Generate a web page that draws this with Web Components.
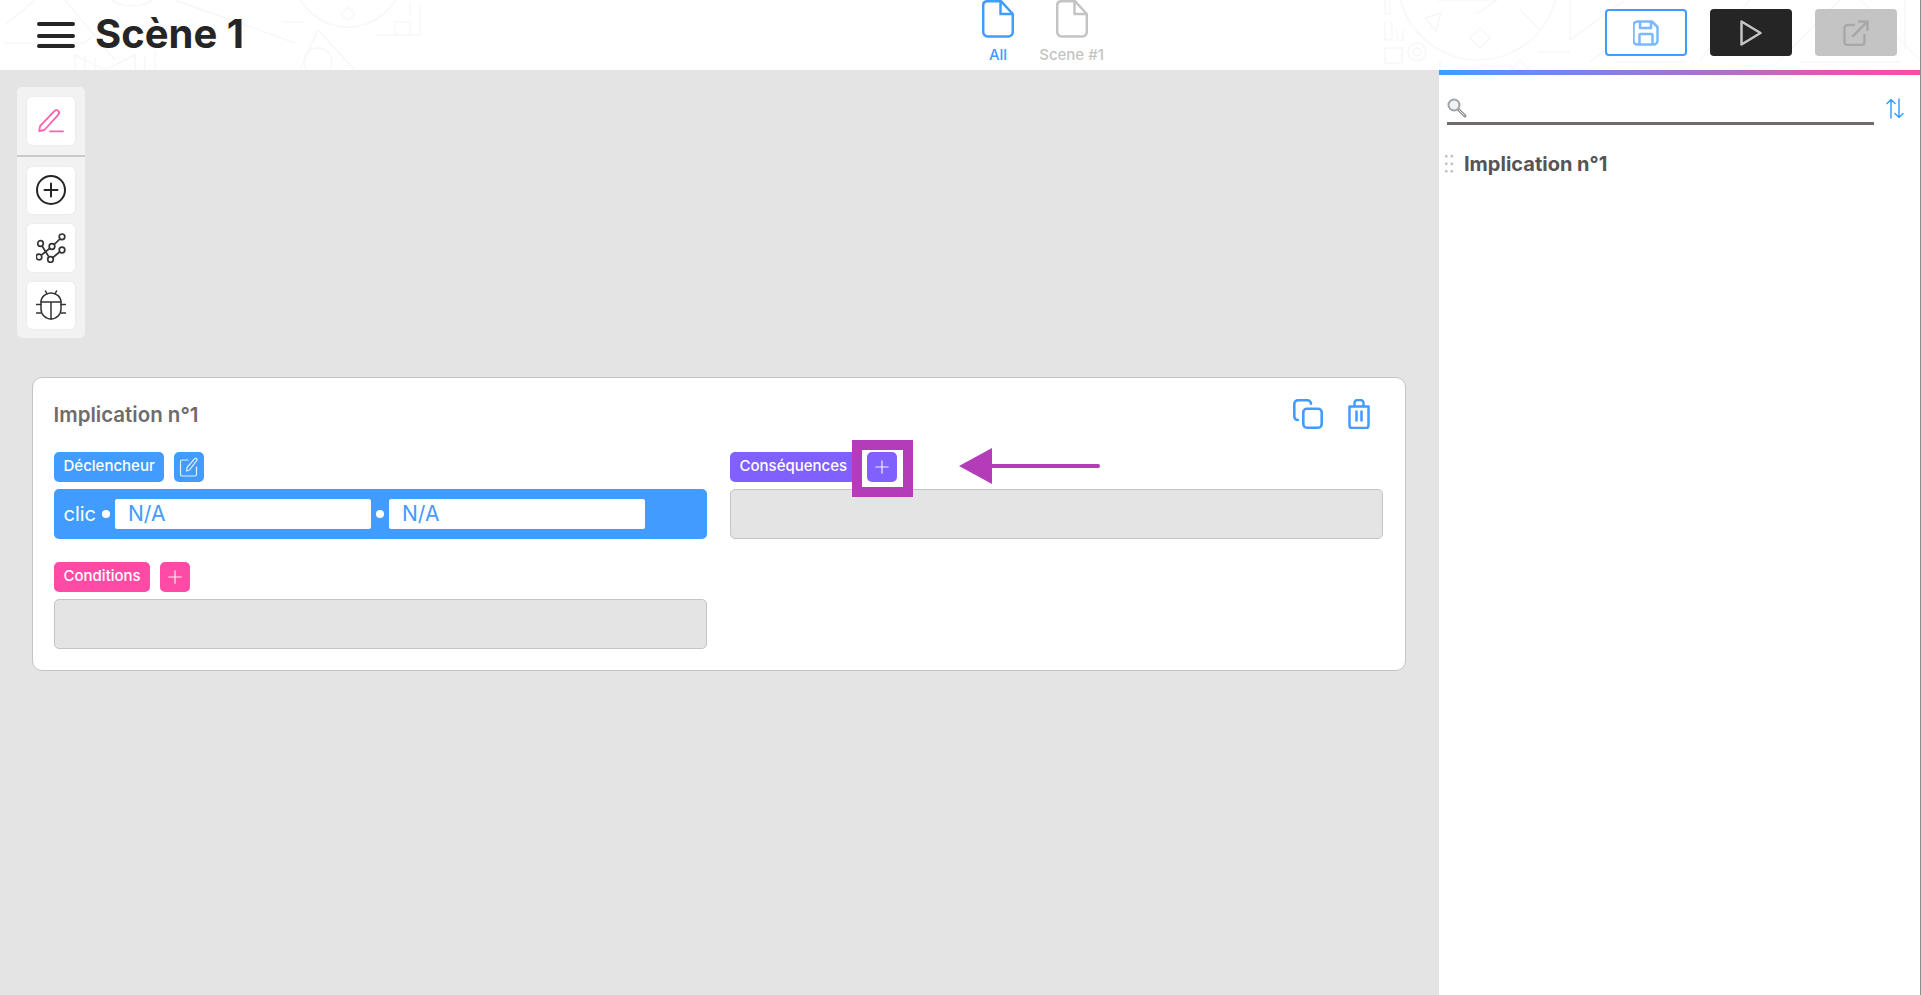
<!DOCTYPE html>
<html lang="fr">
<head>
<meta charset="utf-8">
<title>Scène 1</title>
<style>
  html, body { margin: 0; height: 100%; }
  body { font-family: "Inter", "Liberation Sans", sans-serif; color: #252525; background: #e4e4e4; overflow: hidden; }
  app-shell { height: 995px; }
</style>
</head>
<body>
<app-shell>
  <top-bar slot="top" heading="Scène 1"></top-bar>
  <tool-strip slot="tools"></tool-strip>
  <implication-card slot="canvas" heading="Implication n°1"></implication-card>
  <side-panel slot="side"></side-panel>
</app-shell>

<script>
const icons = {
  burger: `<svg width="38" height="26" viewBox="0 0 38 26"><path d="M2 2h34M2 14h34M2 24h34" stroke="#252525" stroke-width="4" stroke-linecap="round" fill="none"/></svg>`,
  file: `<svg width="32" height="38" viewBox="0 0 32 38" fill="none" stroke="currentColor" stroke-width="2.5" stroke-linejoin="round"><path d="M5 1.2h14L30.8 14v18a4.5 4.5 0 0 1-4.5 4.5H5.7A4.5 4.5 0 0 1 1.2 32V5A4 4 0 0 1 5 1.2z"/><path d="M18.5 1.2V14h12.3"/></svg>`,
  save: `<svg width="26" height="26" viewBox="0 0 26 26" fill="none" stroke="#7ab9ff" stroke-width="2.5" stroke-linejoin="round"><path d="M4.5 1.5h14.5l5.5 5.5v13.5a4 4 0 0 1-4 4h-16a4 4 0 0 1-4-4v-15a4 4 0 0 1 4-4z"/><path d="M7 1.5v6.5h11V1.5M6.5 24.5v-9.5a1 1 0 0 1 1-1h11a1 1 0 0 1 1 1v9.5"/></svg>`,
  play: `<svg width="22" height="26" viewBox="0 0 22 26" fill="none" stroke="#c4c4c4" stroke-width="2.5" stroke-linejoin="round"><path d="M1.5 1.5v23L20.5 13z"/></svg>`,
  share: `<svg width="26" height="26" viewBox="0 0 26 26" fill="none" stroke="#a8a8a8" stroke-width="2.5" stroke-linecap="round" stroke-linejoin="round"><path d="M11 5H4.5a3 3 0 0 0-3 3v14a3 3 0 0 0 3 3h14a3 3 0 0 0 3-3v-7"/><path d="M10 16L24.5 1.5M16 1.5h8.5V10"/></svg>`,
  pen: `<svg width="26" height="24" viewBox="0 0 26 24" fill="none" stroke="#ff5fb2" stroke-width="1.800" stroke-linecap="round" stroke-linejoin="round"><path d="M1.200 22.200l1-5.400L16.600 1.900a2.600 2.600 0 0 1 3.700 0 2.800 2.800 0 0 1 .1 3.800L6.400 21z"/><path d="M12 22.400h13"/></svg>`,
  add: `<svg width="30" height="30" viewBox="0 0 30 30" fill="none" stroke="#252525" stroke-width="2" stroke-linecap="round"><circle cx="15" cy="15" r="14"/><path d="M15 8.500v13M8.500 15h13"/></svg>`,
  graph: `<svg width="30" height="30" viewBox="0 0 30 30" fill="none" stroke="#333" stroke-width="1.700"><path d="M4.500 10.500l10 16M3 24l13-10.500L26 4M14.500 26.500L26 17"/><g fill="#fff"><circle cx="26" cy="3.800" r="2.800"/><circle cx="4.500" cy="10.500" r="2.800"/><circle cx="16" cy="13.500" r="2.800"/><circle cx="26" cy="17" r="2.800"/><circle cx="3" cy="24" r="2.800"/><circle cx="14.500" cy="26.500" r="2.800"/></g></svg>`,
  bug: `<svg width="30" height="30" viewBox="0 0 30 30" fill="none" stroke="#333" stroke-width="1.500" stroke-linecap="round"><path d="M5 12a10 9 0 0 1 20 0v7a10 10 0 0 1-20 0z"/><path d="M5 12h20M15 12v17M9.500 1l1.500 3M20.500 1L19 4M.5 14.500h4.500M29.500 14.500H25M.5 23h4.500M29.500 23H25"/></svg>`,
  edit: `<svg width="20" height="20" viewBox="0 0 20 20" fill="none" stroke="#fff" stroke-width="1.200" stroke-linecap="round" stroke-linejoin="round" opacity=".85"><path d="M9 3H3a1.500 1.500 0 0 0-1.500 1.500v13A1.500 1.500 0 0 0 3 19h13a1.500 1.500 0 0 0 1.500-1.500V10"/><path d="M7.500 14l.5-3.500L15.500 1.800a1.300 1.300 0 0 1 2.300 1.600L10.500 13z"/></svg>`,
  plus: `<svg width="14" height="14" viewBox="0 0 14 14" stroke="#fff" stroke-width="1.200" stroke-linecap="round" opacity=".9"><path d="M7 .8v12.400M.8 7h12.400"/></svg>`,
  copy: `<svg width="30" height="30" viewBox="0 0 30 30" fill="none" stroke="#429cff" stroke-width="2.600" stroke-linejoin="round" stroke-linecap="round"><path d="M4.800 21A3.500 3.500 0 0 1 1.300 17.500V5A3.700 3.700 0 0 1 5 1.300h9.500A3.500 3.500 0 0 1 18 4.800"/><rect x="10.300" y="9.800" width="18.400" height="18.900" rx="3.500"/></svg>`,
  trash: `<svg width="22" height="30" viewBox="0 0 22 30" fill="none" stroke="#429cff" stroke-width="2.500" stroke-linejoin="round" stroke-linecap="round"><path d="M1.500 7.500h19v19a2.500 2.500 0 0 1-2.500 2.500H4a2.500 2.500 0 0 1-2.500-2.500z"/><path d="M6.500 7V4a3 3 0 0 1 3-3h3a3 3 0 0 1 3 3v3M8.500 12.500v9M13.500 12.500v9"/></svg>`,
  search: `<svg width="20" height="20" viewBox="0 0 20 20" fill="none"><path d="M11 11l7 7" stroke="#8d8d8d" stroke-width="3" stroke-linecap="round"/><path d="M11.500 11.500l6 6" stroke="#e8e8e8" stroke-width="1"/><circle cx="7" cy="7" r="5.500" fill="#eef3f8" stroke="#a3a3a3" stroke-width="2"/></svg>`,
  sort: `<svg width="18" height="21" viewBox="0 0 18 21" fill="none" stroke="#429cff" stroke-width="1.500" stroke-linecap="round" stroke-linejoin="round"><path d="M5 20V1.500M1 5.500l4-4 4 4M13 1v18.500M9 15.500l4 4 4-4"/></svg>`,
  grip: `<svg width="8" height="18" viewBox="0 0 8 18" fill="#c4c4c4"><rect width="2.500" height="2.500"/><rect x="5.500" width="2.500" height="2.500"/><rect y="7.500" width="2.500" height="2.500"/><rect x="5.500" y="7.500" width="2.500" height="2.500"/><rect y="15" width="2.500" height="2.500"/><rect x="5.500" y="15" width="2.500" height="2.500"/></svg>`
};

function shadow(el, html) {
  el.attachShadow({ mode: 'open' }).innerHTML = html;
}

class AppShell extends HTMLElement {
  constructor() {
    super();
    shadow(this, `
      <style>
        :host { display: grid; grid-template-columns: 1439px 1fr; grid-template-rows: 70px 1fr; border-right: 1px solid #8d8d8d; box-sizing: border-box; width: 1921px; }
        .top { grid-column: 1 / 3; }
        .canvas { background: #e4e4e4; padding: 17px 33px 0 32px; display: flex; flex-direction: column; align-items: flex-start; }
        ::slotted(tool-strip) { margin-left: -15px; }
        ::slotted(implication-card) { margin-top: 39px; }
      </style>
      <div class="top"><slot name="top"></slot></div>
      <div class="canvas"><slot name="tools"></slot><slot name="canvas"></slot></div>
      <slot name="side"></slot>`);
  }
}

class TopBar extends HTMLElement {
  constructor() {
    super();
    shadow(this, `
      <style>
        :host { display: block; position: relative; height: 70px; background: #fff; overflow: hidden; }
        .pattern { position: absolute; inset: 0; }
        .row { position: relative; height: 70px; display: grid; grid-template-columns: 982px 122px 1fr; }
        .left { display: flex; align-items: center; gap: 20px; padding-left: 37px; }
        .burger { display: flex; }
        h1 { margin: 0 0 2px; font-size: 40px; font-weight: 700; line-height: 66px; color: #252525; }
        .tabs { display: flex; justify-content: space-between; }
        .actions { display: flex; justify-content: flex-end; gap: 23px; padding: 9px 23px 0 0; }
      </style>
      <svg class="pattern" width="1921" height="70" fill="none" stroke="#f7f7f7" stroke-width="1.500">
        <path d="M5 25L35 0M5 43h80l25-23M65 0l50 60M175 0l120 43M75 70V55l30 15 30-15v15M85 55v15M95 58v12M145 55v15M155 50v20M285 22h20"/>
        <circle cx="132" cy="-32" r="38"/><circle cx="348" cy="-28" r="55"/>
        <path d="M348 7l7 7-7 7-7-7zM375 35h45V5M395 35V22h15v13M410 15V2M300 70l18-40 37 40"/><circle cx="318" cy="62" r="14"/>
        <path d="M1385 0v14h5V0M1385 22v18h7V22M1397 30v10h6V30"/>
        <rect x="1385" y="48" width="17" height="15"/><circle cx="1417" cy="52" r="9"/><circle cx="1417" cy="52" r="4"/>
        <circle cx="1478" cy="-20" r="80"/><path d="M1480 28l10 10-10 10-10-10zM1425 18l16-5-5 18zM1437 0h60l-20 14M1520 10l20 20M1538 52h32M1570 0v40l55-40M1590 62l50 -40M1615 62h70M1700 60l50 -60M1780 60l60-60M1800 62h100M1860 0l60 60M1905 0v50"/>
        <path d="M1440 70v-10M1510 70l10-10 10 10"/>
      </svg>
      <div class="row">
        <div class="left"><span class="burger">${icons.burger}</span><h1>${this.getAttribute('heading')}</h1></div>
        <div class="tabs">
          <scene-tab active>All</scene-tab>
          <scene-tab>Scene #1</scene-tab>
        </div>
        <div class="actions">
          <action-button kind="save">${icons.save}</action-button>
          <action-button kind="play">${icons.play}</action-button>
          <action-button kind="share">${icons.share}</action-button>
        </div>
      </div>`);
  }
}

class SceneTab extends HTMLElement {
  constructor() {
    super();
    shadow(this, `
      <style>
        :host { display: flex; flex-direction: column; align-items: center; color: #c4c4c4; font-size: 15px; font-weight: 500; }
        :host([active]) { color: #429cff; }
        .ico { display: flex; height: 38px; }
        .lbl { margin-top: 8px; line-height: 18px; }
      </style>
      <span class="ico">${icons.file}</span><span class="lbl"><slot></slot></span>`);
  }
}

class ActionButton extends HTMLElement {
  constructor() {
    super();
    shadow(this, `
      <style>
        :host { display: flex; align-items: center; justify-content: center; box-sizing: border-box; width: 82px; height: 47px; border-radius: 4px; background: #c4c4c4; }
        :host([kind=save]) { background: #fff; border: 2px solid #429cff; }
        :host([kind=play]) { background: #252525; }
      </style><slot></slot>`);
  }
}

class ToolStrip extends HTMLElement {
  constructor() {
    super();
    shadow(this, `
      <style>
        :host { display: block; width: 68px; background: #f2f2f2; border-radius: 5px; height: 251px; box-sizing: border-box; }
        .group { display: flex; flex-direction: column; align-items: center; gap: 10px; padding: 10px 0; }
        .first { border-bottom: 2px solid #cacaca; }
        .second { padding-top: 10px; }
      </style>
      <div class="group first"><tool-button>${icons.pen}</tool-button></div>
      <div class="group second">
        <tool-button>${icons.add}</tool-button>
        <tool-button>${icons.graph}</tool-button>
        <tool-button>${icons.bug}</tool-button>
      </div>`);
  }
}

class ToolButton extends HTMLElement {
  constructor() {
    super();
    shadow(this, `
      <style>
        :host { display: flex; align-items: center; justify-content: center; width: 48px; height: 47.500px; background: #fff; border-radius: 5px; box-shadow: 0 0 2px rgba(0,0,0,.08); }
      </style><slot></slot>`);
  }
}

class TagLabel extends HTMLElement {
  constructor() {
    super();
    shadow(this, `
      <style>
        :host { display: inline-flex; align-items: center; box-sizing: border-box; height: 30px; padding: 0 9.500px 2px 10px; border-radius: 5px; color: #fff; font-size: 15px; font-weight: 500; background: var(--tag); }
        :host([square]) { width: 30px; padding: 0; justify-content: center; }
      </style><slot></slot>`);
  }
}

class ImplicationSection extends HTMLElement {
  constructor() {
    super();
    const color = this.getAttribute('color');
    shadow(this, `
      <style>
        :host { display: block; --tag: ${color}; }
        .head { display: flex; gap: 10px; margin-bottom: 7px; position: relative; }
      </style>
      <div class="head">
        <tag-label>${this.getAttribute('label')}</tag-label>
        <slot name="action"></slot>
      </div>
      <slot></slot>`);
  }
}

class DropBox extends HTMLElement {
  constructor() {
    super();
    shadow(this, `
      <style>
        :host { display: block; box-sizing: border-box; height: 50px; background: #e4e4e4; border: 1.500px solid #c4c4c4; border-radius: 5px; }
      </style>`);
  }
}

class TriggerBar extends HTMLElement {
  constructor() {
    super();
    shadow(this, `
      <style>
        :host { display: flex; align-items: center; gap: 5px; box-sizing: border-box; height: 50px; padding-left: 10px; background: #429cff; border-radius: 5px; color: #fff; font-size: 20px; }
        .name { margin-right: 1px; }
        .dot { width: 8px; height: 8px; border-radius: 50%; background: #fff; }
        .val { display: flex; align-items: center; box-sizing: border-box; width: 256px; height: 30px; padding-left: 13px; background: #fff; border-radius: 2px; color: #429cff; font-size: 21px; }
      </style>
      <span class="name">clic</span><span class="dot"></span><span class="val">N/A</span><span class="dot"></span><span class="val">N/A</span>`);
  }
}

// the purple frame and arrow are the tutorial's annotation over the + button
class CalloutMark extends HTMLElement {
  constructor() {
    super();
    shadow(this, `
      <style>
        :host { display: block; position: relative; width: 30px; height: 30px; }
        .frame { position: absolute; left: -15px; top: -12px; width: 61px; height: 57px; box-sizing: border-box; border: 10px solid #b53cb8; background: #fff; }
        .inner { position: relative; }
        .arrow { position: absolute; left: 92px; top: -4px; }
      </style>
      <div class="frame"></div>
      <div class="inner"><slot></slot></div>
      <svg class="arrow" width="141" height="36" viewBox="0 0 141 36"><path d="M0 18L33 0v36z" fill="#b53cb8"/><path d="M30 18h109" stroke="#b53cb8" stroke-width="4" stroke-linecap="round"/></svg>`);
  }
}

class ImplicationCard extends HTMLElement {
  constructor() {
    super();
    shadow(this, `
      <style>
        :host { display: block; box-sizing: border-box; width: 1374px; height: 294px; padding: 21.500px 20.500px 0; background: #fff; border: 1.500px solid #c4c4c4; border-radius: 10px; }
        .title { display: flex; justify-content: space-between; align-items: center; height: 29px; margin-bottom: 23px; }
        h2 { margin: 0; font-size: 20.500px; font-weight: 600; color: #6f6b6b; }
        .tools { display: flex; gap: 25px; margin-right: 14.500px; }
        .grid { display: grid; grid-template-columns: 653.500px 653.500px; column-gap: 22.500px; row-gap: 23px; }
        svg { display: block; }
      </style>
      <div class="title"><h2>${this.getAttribute('heading')}</h2><div class="tools">${icons.copy}${icons.trash}</div></div>
      <div class="grid">
        <implication-section label="Déclencheur" color="#429cff">
          <tag-label slot="action" square>${icons.edit}</tag-label>
          <trigger-bar></trigger-bar>
        </implication-section>
        <implication-section label="Conséquences" color="#8060ff">
          <callout-mark slot="action"><tag-label square>${icons.plus}</tag-label></callout-mark>
          <drop-box></drop-box>
        </implication-section>
        <implication-section label="Conditions" color="#ff4ba6">
          <tag-label slot="action" square>${icons.plus}</tag-label>
          <drop-box></drop-box>
        </implication-section>
      </div>`);
  }
}

class SidePanel extends HTMLElement {
  constructor() {
    super();
    shadow(this, `
      <style>
        :host { display: block; background: #fff; }
        .bar { height: 5px; background: linear-gradient(90deg, #429cff, #ff4ba6); }
        .search { display: flex; align-items: flex-start; gap: 12px; padding: 23px 16px 0 8px; }
        .field { flex: 1; height: 27px; box-sizing: border-box; border-bottom: 3px solid #6f6b6b; }
        .sort { display: flex; }
        .item { display: flex; align-items: center; gap: 11px; padding: 27px 0 0 6px; color: #555; font-size: 20px; font-weight: 700; line-height: 24px; }
        svg { display: block; }
      </style>
      <div class="bar"></div>
      <div class="search"><div class="field">${icons.search}</div><span class="sort">${icons.sort}</span></div>
      <div class="item">${icons.grip}<span>Implication n°1</span></div>`);
  }
}

customElements.define('scene-tab', SceneTab);
customElements.define('action-button', ActionButton);
customElements.define('top-bar', TopBar);
customElements.define('tool-button', ToolButton);
customElements.define('tool-strip', ToolStrip);
customElements.define('tag-label', TagLabel);
customElements.define('drop-box', DropBox);
customElements.define('trigger-bar', TriggerBar);
customElements.define('callout-mark', CalloutMark);
customElements.define('implication-section', ImplicationSection);
customElements.define('implication-card', ImplicationCard);
customElements.define('side-panel', SidePanel);
customElements.define('app-shell', AppShell);
</script>
</body>
</html>
